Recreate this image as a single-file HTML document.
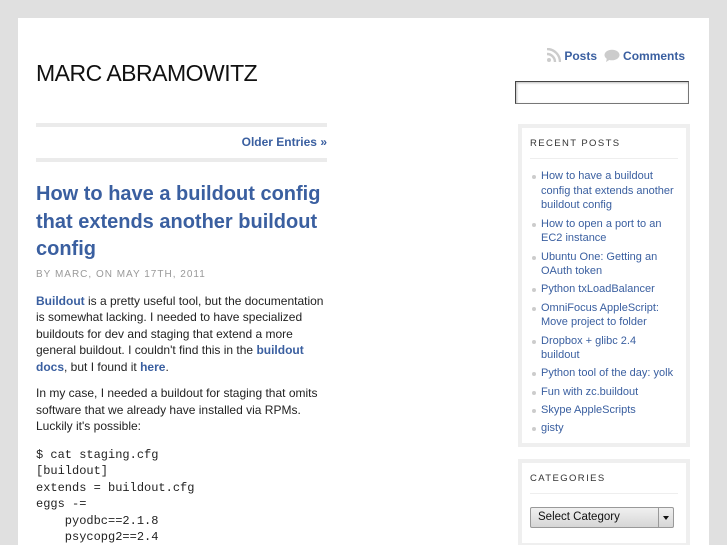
<!DOCTYPE html>
<html><head><style>
html,body{margin:0;height:545px;overflow:hidden}
body{background:#e0e0e0;font-family:"Liberation Sans",sans-serif;}
#page{position:absolute;left:18px;top:18px;width:691px;height:527px;background:#fff;overflow:hidden}
a{color:#3a5fa0;text-decoration:none}
h1{position:absolute;left:18px;top:42px;margin:0;font-weight:normal;font-size:23px;color:#111;letter-spacing:-0.5px}
#feeds{position:absolute;left:528px;top:30px;font-size:12px;font-weight:bold}
#search{position:absolute;left:497px;top:63px;width:172px;height:21px;border:1px solid #777;border-top-color:#444;border-left-color:#444;box-shadow:inset 1px 1px 2px #bbb}
#main{position:absolute;left:18px;top:105px;width:291px}
.bar{height:4px;background:#ebebeb}
.nav{text-align:right;font-size:12px;font-weight:bold;height:31px;line-height:30px}
h2{font-size:20px;line-height:27.5px;margin:19px 0 5px;color:#3a5fa0;font-weight:bold}
.meta{font-size:10px;letter-spacing:1px;color:#999;margin-bottom:13px}
p{font-size:12px;line-height:16.5px;color:#222;margin:0 0 10px}
p a{font-weight:bold}
pre{font-family:"Liberation Mono",monospace;font-size:12px;line-height:16.5px;margin:12px 0 0;color:#222}
.box{position:absolute;left:500px;width:164px;border:4px solid #efefef;background:#fff}
.box h3{font-size:9.5px;letter-spacing:1.4px;font-weight:normal;color:#333;margin:10px 8px 0;padding-bottom:9px;border-bottom:1px solid #eee}
ul{margin:10px 0 0;padding:0;list-style:none}
li{font-size:11px;line-height:14.7px;margin:0 12px 3.5px 19px;position:relative}
li:before{content:"";position:absolute;left:-9px;top:6px;width:4px;height:4px;border-radius:50%;background:#ccc}
.sel{position:absolute;left:8px;top:44px;width:142px;height:19px;font-size:11.5px;line-height:19px;border:1px solid #999;border-radius:2px;background:linear-gradient(#f0f0f0,#d6d6d6);color:#111;text-indent:7px}
.sel span{position:absolute;right:0;top:0;width:14px;height:19px;border-left:1px solid #999;text-indent:0}
.sel span:after{content:"";position:absolute;left:4px;top:8px;border:3px solid transparent;border-top:4px solid #111}
</style></head><body>
<div id="page">
<h1>MARC ABRAMOWITZ</h1>
<div id="feeds"><svg width="15" height="15" viewBox="0 0 15 15" style="vertical-align:-3px"><circle cx="3" cy="12" r="2" fill="#ccc"/><path d="M1 6a8 8 0 0 1 8 8M1 1a13 13 0 0 1 13 13" stroke="#ccc" stroke-width="2.4" fill="none"/></svg> <a href="#">Posts</a> &nbsp;<svg width="16" height="13" viewBox="0 0 16 13" style="vertical-align:-2px"><ellipse cx="8" cy="6" rx="7.5" ry="5.3" fill="#ccc"/><path d="M3 9 L2 13 L7 10z" fill="#ccc"/></svg> <a href="#">Comments</a></div>
<div id="search"></div>
<div id="main">
<div class="bar"></div>
<div class="nav"><a href="#">Older Entries »</a></div>
<div class="bar"></div>
<h2><a href="#">How to have a buildout config that extends another buildout config</a></h2>
<div class="meta">BY MARC, ON MAY 17TH, 2011</div>
<p><a href="#">Buildout</a> is a pretty useful tool, but the documentation is somewhat lacking. I needed to have specialized buildouts for dev and staging that extend a more general buildout. I couldn't find this in the <a href="#">buildout docs</a>, but I found it <a href="#">here</a>.</p>
<p>In my case, I needed a buildout for staging that omits software that we already have installed via RPMs. Luckily it's possible:</p>
<pre>$ cat staging.cfg
[buildout]
extends = buildout.cfg
eggs -=
    pyodbc==2.1.8
    psycopg2==2.4</pre>
</div>
<div class="box" style="top:106px;height:315px">
<h3>RECENT POSTS</h3>
<ul>
<li><a href="#">How to have a buildout config that extends another buildout config</a></li>
<li><a href="#">How to open a port to an EC2 instance</a></li>
<li><a href="#">Ubuntu One: Getting an OAuth token</a></li>
<li><a href="#">Python txLoadBalancer</a></li>
<li><a href="#">OmniFocus AppleScript: Move project to folder</a></li>
<li><a href="#">Dropbox + glibc 2.4 buildout</a></li>
<li><a href="#">Python tool of the day: yolk</a></li>
<li><a href="#">Fun with zc.buildout</a></li>
<li><a href="#">Skype AppleScripts</a></li>
<li><a href="#">gisty</a></li>
</ul>
</div>
<div class="box" style="top:441px;height:80px">
<h3>CATEGORIES</h3>
<div class="sel">Select Category<span></span></div>
</div>
</div>
</body></html>
